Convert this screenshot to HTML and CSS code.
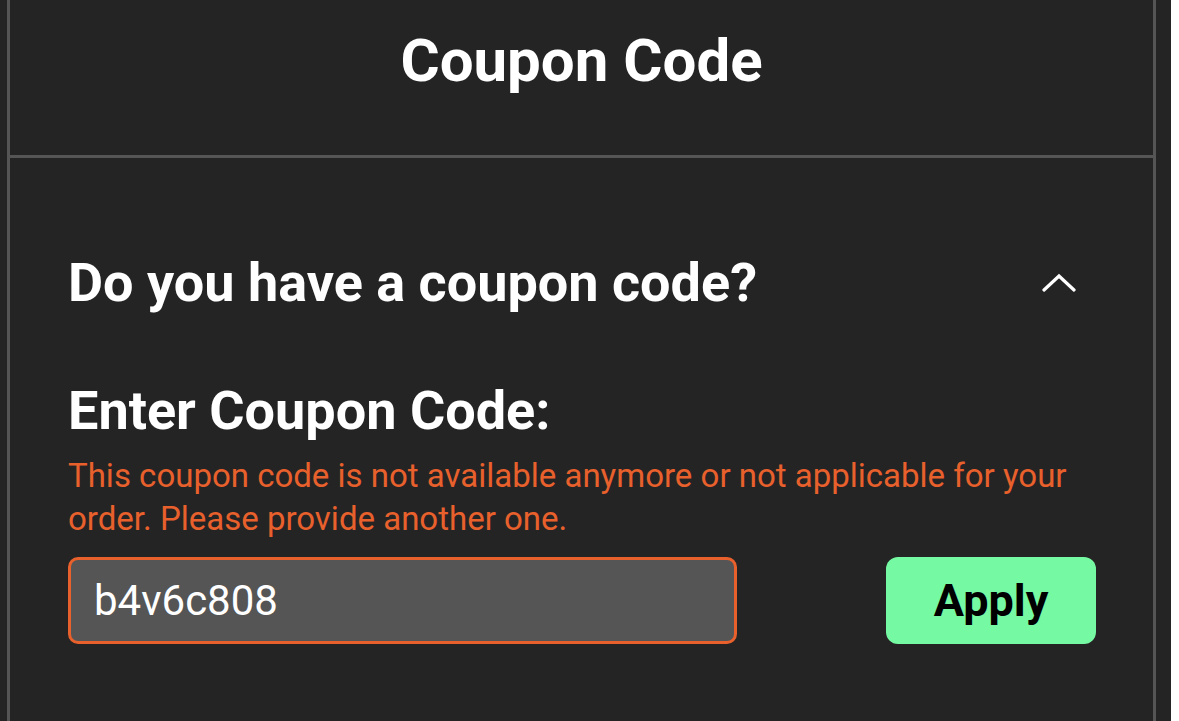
FILE: index.html
```html
<!DOCTYPE html>
<html lang="en">
<head>
<meta charset="utf-8">
<title>Coupon Code</title>
<link rel="stylesheet" href="styles.css">
</head>
<body>
<div class="frame">
  <div class="panel">
    <header class="panel-header">
      <h1 class="title">Coupon Code</h1>
    </header>
    <section class="panel-body">
      <div class="question">
        <h2 class="question-text">Do you have a coupon code?</h2>
        <svg class="chevron" width="34" height="20" viewBox="0 0 34 20" aria-hidden="true">
          <path d="M2 17 L17 3 L32 17" fill="none" stroke="#fff" stroke-width="3.2" stroke-linecap="round" stroke-linejoin="miter"/>
        </svg>
      </div>
      <h3 class="label">Enter Coupon Code:</h3>
      <p class="error">This coupon code is not available anymore or not applicable for your order. Please provide another one.</p>
      <div class="form-row">
        <input class="code-input" type="text" value="b4v6c808">
        <button class="apply" type="button">Apply</button>
      </div>
    </section>
  </div>
</div>
</body>
</html>
```
FILE: styles.css
```css
html, body {
  margin: 0;
  padding: 0;
  background: #ffffff;
}
body {
  font-family: Roboto, "Liberation Sans", sans-serif;
  color: #ffffff;
}
.frame {
  width: 1171px;
  height: 721px;
  background: #242424;
  padding-left: 7px;
  box-sizing: border-box;
  overflow: hidden;
}
.panel {
  width: 1143px;
  height: 760px;
  border-left: 3px solid #555555;
  border-right: 3px solid #555555;
}
.panel-header {
  height: 155px;
  border-bottom: 3px solid #555555;
  display: flex;
  justify-content: center;
}
.title {
  margin: 0;
  padding-top: 25px;
  font-size: 60px;
  line-height: 72px;
  font-weight: 700;
}
.panel-body {
  padding: 0 57px 0 58px;
}
.question {
  display: flex;
  align-items: center;
  justify-content: space-between;
  padding-right: 20px;
  margin-top: 93px;
}
.question-text {
  margin: 0;
  font-size: 54px;
  line-height: 64px;
  font-weight: 700;
}
.chevron {
  display: block;
}
.label {
  margin: 64px 0 0;
  font-size: 54px;
  line-height: 64px;
  font-weight: 700;
}
.error {
  margin: 11px 0 0;
  font-size: 33px;
  line-height: 43px;
  color: #e8602c;
}
.form-row {
  display: flex;
  justify-content: space-between;
  align-items: center;
  margin-top: 17px;
}
.code-input {
  width: 669px;
  height: 87px;
  box-sizing: border-box;
  border: 3px solid #e8602c;
  border-radius: 10px;
  background: #555555;
  color: #ffffff;
  font-family: Roboto, "Liberation Sans", sans-serif;
  font-size: 42px;
  padding: 0 23px;
  outline: none;
}
.apply {
  width: 210px;
  height: 87px;
  border: none;
  border-radius: 12px;
  background: #76f9a3;
  color: #000000;
  font-family: Roboto, "Liberation Sans", sans-serif;
  font-size: 45px;
  font-weight: 700;
  cursor: pointer;
}
```
